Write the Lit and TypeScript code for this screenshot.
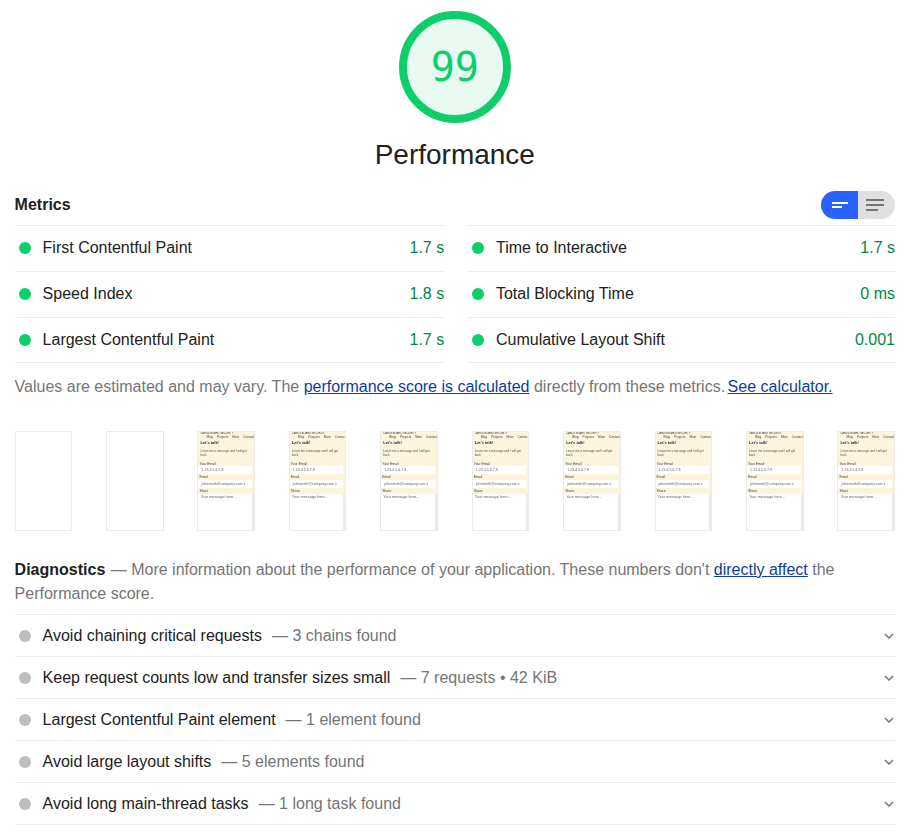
import { LitElement, html, css, svg } from "lit";
import { customElement } from "lit/decorators.js";

const metrics = [
  ["First Contentful Paint", "1.7 s", "Time to Interactive", "1.7 s"],
  ["Speed Index", "1.8 s", "Total Blocking Time", "0 ms"],
  ["Largest Contentful Paint", "1.7 s", "Cumulative Layout Shift", "0.001"],
];
const audits = [
  ["Avoid chaining critical requests", "3 chains found"],
  ["Keep request counts low and transfer sizes small", "7 requests • 42 KiB"],
  ["Largest Contentful Paint element", "1 element found"],
  ["Avoid large layout shifts", "5 elements found"],
  ["Avoid long main-thread tasks", "1 long task found"],
];

@customElement("app-root")
export class AppRoot extends LitElement {
  static styles = css`
    :host { display: block; font-family: "Liberation Sans", Arial, sans-serif; color: #212121; font-size: 16px; line-height: 24px; background: #fff; height: 836px; overflow: hidden; }
    .page { padding: 0 17px 0 14.6px; display: flex; flex-direction: column; }
    .gauge { display: flex; flex-direction: column; align-items: center; padding-top: 7px; }
    .gauge-svg { position: relative; width: 120px; height: 120px; }
    .gauge-svg svg { display: block; }
    .score { position: absolute; inset: 0; display: flex; align-items: center; justify-content: center; font-family: "DejaVu Sans Mono", monospace; font-size: 40px; color: #0cce6b; }
    .title { font-size: 28px; line-height: 36px; margin-top: 10px; }
    .mhead { display: flex; justify-content: space-between; align-items: center; height: 28px; margin-top: 18px; }
    .mhead b { font-size: 16px; font-weight: 700; }
    .toggle { display: flex; width: 74px; height: 28px; border-radius: 14px; overflow: hidden; }
    .toggle div { flex: 1; display: flex; align-items: center; justify-content: center; box-sizing: border-box; }
    .t-on { background: #2a62fe; padding-left: 2px; }
    .t-off { background: #e0e0e0; padding-right: 3px; }
    .mgrid { display: grid; grid-template-columns: 429.6px 427.4px; column-gap: 23.4px; margin-top: 6px; }
    .m { display: flex; align-items: center; box-sizing: border-box; height: 46px; border-top: 1px solid #ebebeb; padding: 0 0 2px 4.4px; }
    .m.last { border-bottom: 1px solid #ebebeb; padding-bottom: 1px; }
    .dot { width: 12px; height: 12px; border-radius: 50%; background: #0cce6b; flex: none; }
    .m .name { margin-left: 12px; flex: 1; }
    .m:nth-child(odd) .name { margin-left: 11.6px; }
    .m .val { color: #018642; }
    .note { color: #757575; margin-top: 12px; }
    .calc { margin-left: -2px; }
    a { color: #0d3ca0; text-decoration: underline; }
    .film { display: flex; justify-content: space-between; margin-top: 32px; }
    .frame { width: 57.6px; height: 100px; box-sizing: border-box; border: 1px solid #ebebeb; overflow: hidden; background: #fff; display: flex; flex-direction: column; flex: none; }
    .shot { flex: 1; background: #fdf4de; display: flex; flex-direction: column; color: #444; white-space: nowrap; min-height: 0; filter: blur(0.4px); }
    .top { font-size: 2.6px; line-height: 3px; height: 3px; color: #333; padding-left: 2px; }
    .nav { display: flex; gap: 4px; font-size: 3.2px; line-height: 5px; height: 5px; align-items: center; padding-left: 2px; }
    .nav i { width: 6px; height: 4px; border-radius: 2px; background: #222; margin-right: 2px; }
    .h { font-size: 4px; font-weight: 700; line-height: 6px; height: 6px; color: #16264d; padding-left: 2px; }
    .p { font-size: 3px; line-height: 4px; margin-top: 3px; white-space: normal; height: 14px; color: #555; padding: 0 6px 0 2px; box-sizing: border-box; }
    .lab { font-size: 3.4px; line-height: 3px; height: 3px; padding-left: 1px; }
    .in { background: #fff; margin: 0 2px 2.5px 0; height: 7.5px; line-height: 8px; padding-left: 3px; font-size: 3.6px; color: #666; }
    .in.b { height: 8px; margin: 1px 2px 2px 0; }
    .ta { background: #fff; flex: 1; margin-top: 1px; padding: 1px 2px; font-size: 3.8px; line-height: 5px; color: #666; border-right: 2px solid #f1e6e8; }
    .diag { color: #757575; margin-top: 27px; }
    .diag b { color: #212121; margin-right: 1px; }
    .audits { margin-top: 8px; border-bottom: 1px solid #ebebeb; }
    .a { display: flex; align-items: center; height: 41px; border-top: 1px solid #ebebeb; padding-left: 4.4px; }
    .a .dot { background: #bdbdbd; }
    .a .nm { margin-left: 11.6px; }
    .a .ds { margin-left: 10px; color: #757575; }
    .a svg { margin-left: auto; margin-right: 1px; }
  `;

  shot() {
    return html`<div class="shot">
      <div class="top">CARDS BOARD SECURITY</div>
      <div class="nav"><i></i><span>Blog</span><span>Projects</span><span>Main</span><span>Contact</span></div>
      <div class="h">Let's talk!</div>
      <div class="p">Leave me a message and I will get back</div>
      <div class="lab">Your Email</div><div class="in">1.23.4.5.6.7.8</div>
      <div class="lab">Email</div><div class="in b">johnsmith@company.com x</div>
      <div class="lab">Share</div><div class="ta">Your message here...</div>
    </div>`;
  }

  render() {
    const frames = Array.from({ length: 10 }, (_, i) => i);
    const r = 52;
    const c = 2 * Math.PI * r;
    return html`<div class="page">
      <div class="gauge">
        <div class="gauge-svg">
          <svg viewBox="0 0 120 120" width="120" height="120">
            <circle cx="60" cy="60" r="52" fill="#e7f9f0" stroke="none"></circle>
            ${svg`<circle cx="60" cy="60" r="${r}" fill="none" stroke="#0cce6b" stroke-width="8" stroke-linecap="round" stroke-dasharray="${c * 0.99} ${c}" transform="rotate(-90 60 60)"></circle>`}
          </svg>
          <div class="score">99</div>
        </div>
        <div class="title">Performance</div>
      </div>
      <div class="mhead"><b>Metrics</b>
        <div class="toggle">
          <div class="t-on"><svg width="16" height="8" viewBox="0 0 16 8"><path d="M0 1h16v2H0zM0 5h10v2H0z" fill="#fff"></path></svg></div>
          <div class="t-off"><svg width="18" height="12" viewBox="0 0 18 12"><path d="M0 0h18v2H0zM0 5h18v2H0zM0 10h12v2H0z" fill="#757575"></path></svg></div>
        </div>
      </div>
      <div class="mgrid">
        ${metrics.flatMap((row, i) => [0, 2].map((o) => html`<div class="m ${i === 2 ? "last" : ""}"><span class="dot"></span><span class="name">${row[o]}</span><span class="val">${row[o + 1]}</span></div>`))}
      </div>
      <div class="note">Values are estimated and may vary. The <a>performance score is calculated</a> directly from these metrics. <a class="calc">See calculator.</a></div>
      <div class="film">
        ${frames.map((i) => html`<div class="frame">${i < 2 ? "" : this.shot()}</div>`)}
      </div>
      <div class="diag"><b>Diagnostics</b> — More information about the performance of your application. These numbers don't <a>directly affect</a> the Performance score.</div>
      <div class="audits">
        ${audits.map((a) => html`<div class="a"><span class="dot"></span><span class="nm">${a[0]}</span><span class="ds">— ${a[1]}</span>
          <svg width="10" height="6" viewBox="0 0 10 6"><path d="M1 1l4 4 4-4" fill="none" stroke="#757575" stroke-width="1.5"></path></svg></div>`)}
      </div>
    </div>`;
  }
}
